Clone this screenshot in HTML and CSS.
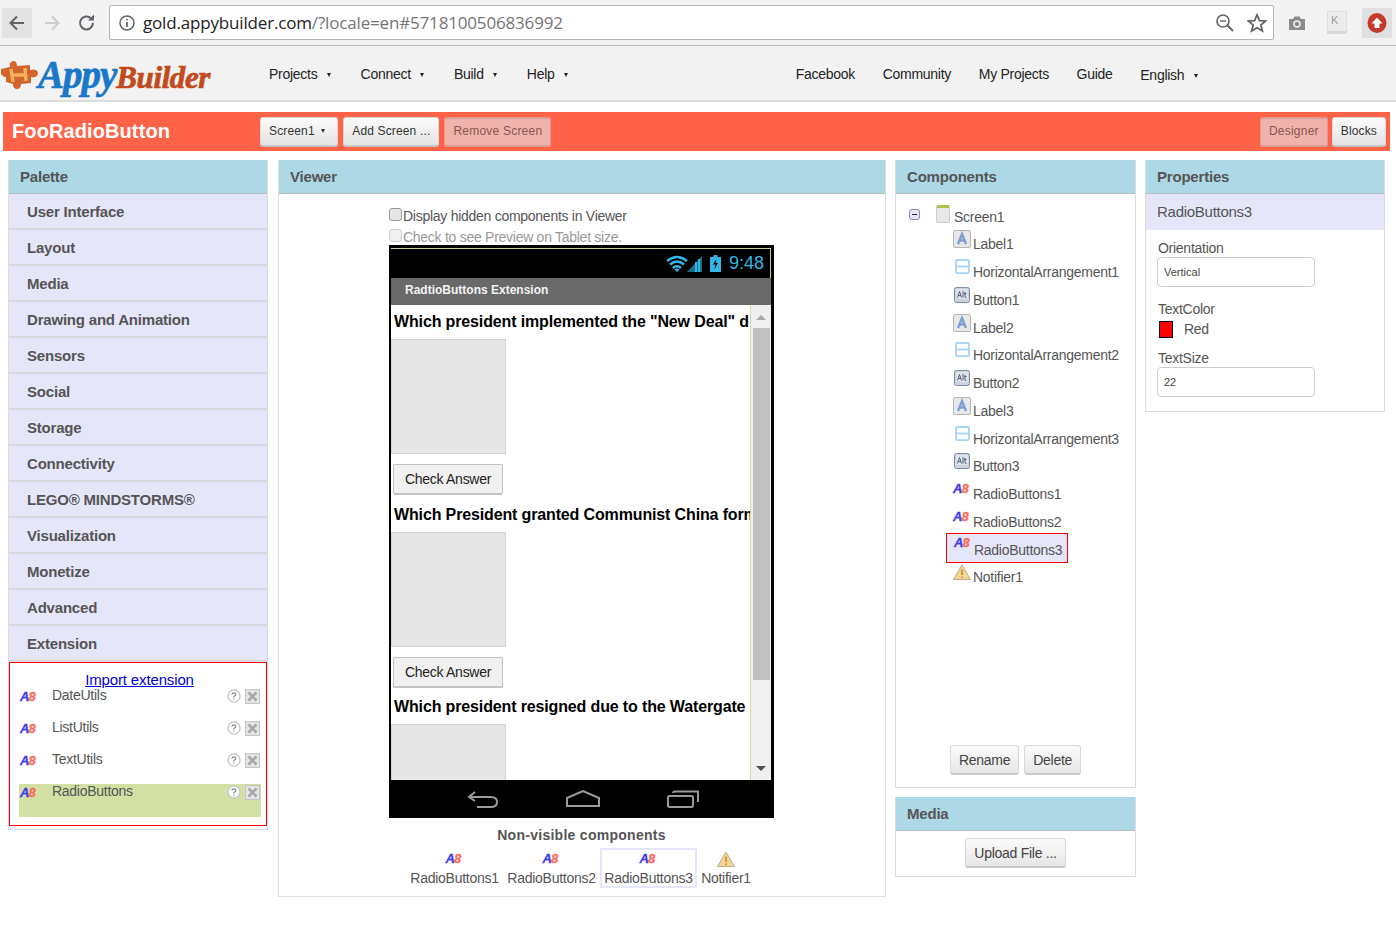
FILE: index.html
```html
<!DOCTYPE html>
<html lang="en">

<head>
    <meta charset="UTF-8">
    <meta name="viewport" content="width=device-width, initial-scale=1.0">
    <title>AppyBuilder</title>
    <link rel="stylesheet" href="styles.css">
</head>

<body>
    <svg class="sprites" width="0" height="0">
        <symbol id="ico-label" viewBox="0 0 18 18">
            <rect x="0.5" y="0.5" width="17" height="17" rx="1.5" fill="#e8e8e8" stroke="#b5b5b5"/>
            <path d="M5 14 L9 4 L13 14 M6.5 10.5 H11.5" fill="none" stroke="#7f9fd0" stroke-width="2.4"/>
        </symbol>
        <symbol id="ico-arr" viewBox="0 0 16 16">
            <rect x="1" y="1" width="14" height="14" rx="1.5" fill="#fff" stroke="#a9d4fa" stroke-width="2"/>
            <path d="M1 8 H15" stroke="#a9d4fa" stroke-width="2"/>
        </symbol>
        <symbol id="ico-btn" viewBox="0 0 16 16">
            <rect x="0.5" y="0.5" width="15" height="15" rx="2" fill="#ccd3de" stroke="#7b8ca6"/>
            <rect x="2" y="2" width="12" height="10" fill="#dfe3ea"/>
            <path d="M3.5 10.5 L5.5 4.5 L7.5 10.5 M4.3 8.5 H6.7 M9 4 V10.5 M11 5 V10 Q11 10.5 12.5 10.5 M10 6.5 H12.5" fill="none" stroke="#56627a" stroke-width="1"/>
        </symbol>
        <symbol id="ico-warn" viewBox="0 0 18 16">
            <path d="M9 1 L17.5 15.5 H0.5 Z" fill="#f4d692" stroke="#b9ad90"/>
            <path d="M9 5.5 V11 M9 12.5 V14" stroke="#c08a30" stroke-width="1.6"/>
        </symbol>
        <symbol id="ico-help" viewBox="0 0 14 14">
            <circle cx="7" cy="7" r="6" fill="#fff" stroke="#ccc" stroke-width="1.6"/>
            <path d="M5 5.5 Q5 3.8 7 3.8 Q9 3.8 9 5.4 Q9 6.4 7 7.4 V8.4 M7 9.5 V10.8" fill="none" stroke="#888" stroke-width="1.2"/>
        </symbol>
        <symbol id="ico-del" viewBox="0 0 15 15">
            <rect x="0.5" y="0.5" width="14" height="14" fill="#e4e4e4" stroke="#c4c4c4"/>
            <path d="M3.5 3.5 L11.5 11.5 M11.5 3.5 L3.5 11.5" stroke="#a8a8a8" stroke-width="2.6"/>
        </symbol>
    </svg>

    <!-- browser toolbar -->
    <div class="chrome">
        <span class="chrome-btn active">
            <svg width="20" height="20" viewBox="0 0 20 20"><path d="M17 10 H4 M10 3.5 L3.5 10 L10 16.5" fill="none" stroke="#5f6368" stroke-width="2"/></svg>
        </span>
        <span class="chrome-btn">
            <svg width="20" height="20" viewBox="0 0 20 20"><path d="M3 10 H16 M10 3.5 L16.5 10 L10 16.5" fill="none" stroke="#cdcdcd" stroke-width="2"/></svg>
        </span>
        <span class="chrome-btn">
            <svg width="20" height="20" viewBox="0 0 20 20"><path d="M16 10 A6.5 6.5 0 1 1 14 5.2" fill="none" stroke="#5f6368" stroke-width="2"/><path d="M11 7.5 H17 V1.5 Z" fill="#5f6368"/></svg>
        </span>
        <div class="omnibox">
            <svg width="18" height="18" viewBox="0 0 18 18"><circle cx="9" cy="9" r="7" fill="none" stroke="#5f6368" stroke-width="1.5"/><path d="M9 8 V13 M9 5 V6.6" stroke="#5f6368" stroke-width="1.7"/></svg>
            <span class="url"><span class="url-host">gold.appybuilder.com</span>/?locale=en#5718100506836992</span>
            <svg class="omni-zoom" width="20" height="20" viewBox="0 0 20 20"><circle cx="8" cy="8" r="6" fill="none" stroke="#5f6368" stroke-width="1.6"/><path d="M5 8 H11" stroke="#5f6368" stroke-width="1.4"/><path d="M12.5 12.5 L18 18" stroke="#5f6368" stroke-width="2"/></svg>
            <svg width="20" height="20" viewBox="0 0 20 20"><path d="M10 1.8 L12.4 7.6 L18.6 8 L13.8 12 L15.4 18 L10 14.7 L4.6 18 L6.2 12 L1.4 8 L7.6 7.6 Z" fill="none" stroke="#5f6368" stroke-width="1.7"/></svg>
        </div>
        <div class="ext-icons">
            <svg width="18" height="16" viewBox="0 0 18 16"><path d="M1 4 H5 L6.5 1.5 H11.5 L13 4 H17 V15 H1 Z" fill="#8a8a8a"/><circle cx="9" cy="9" r="3" fill="none" stroke="#f2f2f2" stroke-width="1.5"/></svg>
            <span class="ext-k">K</span>
            <span class="ext-up">
                <svg width="20" height="20" viewBox="0 0 20 20"><ellipse cx="10" cy="10" rx="9.5" ry="10" fill="#c5392a"/><path d="M10 4.5 L15.5 10.5 H12.5 V15 H7.5 V10.5 H4.5 Z" fill="#fff"/></svg>
            </span>
        </div>
    </div>

    <!-- top menu -->
    <div class="topnav">
        <div class="logo">
            <svg width="42" height="34" viewBox="0 0 42 34"><path d="M1 12 L10 10 Q9 5 13 4 Q17 4 17 9 L30 8 L30 13 Q37 11 38 16 Q38 21 31 20 L31 26 L21 27 Q21 32 17 32 Q13 32 13 27 L6 25 L6 20 Q0 20 1 12 Z" fill="#d5642c"/><path d="M11 12 L13 25 M25 11 L26 24 M12 18 H26" stroke="#f2b25c" stroke-width="3.4" fill="none"/></svg>
            <span class="logo-text"><span class="logo-appy">Appy</span><span class="logo-builder">Builder</span></span>
        </div>
        <nav class="menu-left">
            <a>Projects <i class="caret"></i></a>
            <a>Connect <i class="caret"></i></a>
            <a>Build <i class="caret"></i></a>
            <a>Help <i class="caret"></i></a>
        </nav>
        <nav class="menu-right">
            <a>Facebook</a>
            <a>Community</a>
            <a>My Projects</a>
            <a>Guide</a>
            <a class="lang">English <i class="caret"></i></a>
        </nav>
    </div>

    <!-- project bar -->
    <div class="projectbar">
        <span class="project-name">FooRadioButton</span>
        <button class="tbtn">Screen1 <i class="caret"></i></button>
        <button class="tbtn">Add Screen ...</button>
        <button class="tbtn off">Remove Screen</button>
        <span class="spacer"></span>
        <button class="tbtn off designer">Designer</button>
        <button class="tbtn">Blocks</button>
    </div>

    <div class="workspace">
        <!-- palette -->
        <section class="panel palette">
            <h2 class="panel-head">Palette</h2>
            <div class="drawer">User Interface</div>
            <div class="drawer">Layout</div>
            <div class="drawer">Media</div>
            <div class="drawer">Drawing and Animation</div>
            <div class="drawer">Sensors</div>
            <div class="drawer">Social</div>
            <div class="drawer">Storage</div>
            <div class="drawer">Connectivity</div>
            <div class="drawer">LEGO® MINDSTORMS®</div>
            <div class="drawer">Visualization</div>
            <div class="drawer">Monetize</div>
            <div class="drawer">Advanced</div>
            <div class="drawer">Extension</div>
            <div class="ext-box">
                <a class="import-link">Import extension</a>
                <div class="ext-row">
                    <span class="ab"><b>A</b><i>8</i></span><span class="ext-name">DateUtils</span>
                    <svg class="ext-help"><use href="#ico-help"/></svg><svg class="ext-del"><use href="#ico-del"/></svg>
                </div>
                <div class="ext-row">
                    <span class="ab"><b>A</b><i>8</i></span><span class="ext-name">ListUtils</span>
                    <svg class="ext-help"><use href="#ico-help"/></svg><svg class="ext-del"><use href="#ico-del"/></svg>
                </div>
                <div class="ext-row">
                    <span class="ab"><b>A</b><i>8</i></span><span class="ext-name">TextUtils</span>
                    <svg class="ext-help"><use href="#ico-help"/></svg><svg class="ext-del"><use href="#ico-del"/></svg>
                </div>
                <div class="ext-row picked">
                    <span class="ab"><b>A</b><i>8</i></span><span class="ext-name">RadioButtons</span>
                    <svg class="ext-help"><use href="#ico-help"/></svg><svg class="ext-del"><use href="#ico-del"/></svg>
                </div>
            </div>
        </section>

        <!-- viewer -->
        <section class="panel viewer">
            <h2 class="panel-head">Viewer</h2>
            <div class="viewer-body">
                <label class="chk"><input type="checkbox">Display hidden components in Viewer</label>
                <label class="chk faded"><input type="checkbox" disabled>Check to see Preview on Tablet size.</label>
                <div class="phone">
                    <div class="status">
                        <svg width="36" height="18" viewBox="0 0 36 18"><path d="M1 6 Q11 -2 21 6 M4 9.5 Q11 3.5 18 9.5 M7 13 Q11 9.5 15 13" fill="none" stroke="#33b5e5" stroke-width="2.4"/><path d="M11 17 L8.5 14.5 Q11 12.5 13.5 14.5 Z" fill="#33b5e5"/><path d="M21 17 L36 1 V17 Z" fill="#1e6f8d"/><path d="M30 17 V7 M33 17 V4" stroke="#33b5e5" stroke-width="2"/></svg>
                        <svg class="battery" width="11" height="17" viewBox="0 0 11 17"><path d="M3.5 0 H7.5 V2 H11 V17 H0 V2 H3.5 Z" fill="#33b5e5"/><path d="M6.5 4 L3 9.5 H5.5 L4.5 14 L8 8 H5.5 Z" fill="#000"/></svg>
                        <span class="clock">9:48</span>
                    </div>
                    <div class="app-title">RadtioButtons Extension</div>
                    <div class="screen">
                        <div class="screen-content">
                            <div class="question">Which president implemented the "New Deal" d</div>
                            <div class="pic"></div>
                            <button class="answer">Check Answer</button>
                            <div class="question">Which President granted Communist China form</div>
                            <div class="pic"></div>
                            <button class="answer">Check Answer</button>
                            <div class="question">Which president resigned due to the Watergate</div>
                            <div class="pic"></div>
                        </div>
                        <div class="scrollbar">
                            <span class="arrow-up"></span>
                            <span class="thumb"></span>
                            <span class="arrow-down"></span>
                        </div>
                    </div>
                    <div class="softkeys">
                        <svg width="32" height="20" viewBox="0 0 32 20"><path d="M8 3 L2 8 L8 12 M2 8 H24 Q30 8 30 13 Q30 18 24 18 H10" fill="none" stroke="#9a9a9a" stroke-width="2"/></svg>
                        <svg width="34" height="18" viewBox="0 0 34 18"><path d="M1 8 L17 1 L33 8 V16 H1 Z" fill="none" stroke="#9a9a9a" stroke-width="2"/></svg>
                        <svg width="32" height="18" viewBox="0 0 32 18"><rect x="1" y="6" width="25" height="11" rx="1.5" fill="none" stroke="#9a9a9a" stroke-width="2"/><path d="M6 3 Q6 1.5 8 1.5 H31 V12" fill="none" stroke="#9a9a9a" stroke-width="2"/></svg>
                    </div>
                </div>
                <div class="nonvis-title">Non-visible components</div>
                <div class="nonvis">
                    <div class="nv"><span class="ab"><b>A</b><i>8</i></span><span>RadioButtons1</span></div>
                    <div class="nv"><span class="ab"><b>A</b><i>8</i></span><span>RadioButtons2</span></div>
                    <div class="nv sel"><span class="ab"><b>A</b><i>8</i></span><span>RadioButtons3</span></div>
                    <div class="nv nv-last"><svg class="nv-warn"><use href="#ico-warn"/></svg><span>Notifier1</span></div>
                </div>
            </div>
        </section>

        <div class="col-mid">
            <!-- components -->
            <section class="panel components">
                <h2 class="panel-head">Components</h2>
                <div class="tree">
                    <div class="tree-root">
                        <span class="collapse"></span>
                        <span class="screen-ico"></span>
                        <span class="root-name">Screen1</span>
                    </div>
                    <div class="tree-row"><svg class="tico"><use href="#ico-label"/></svg>Label1</div>
                    <div class="tree-row"><svg class="tico-arr"><use href="#ico-arr"/></svg>HorizontalArrangement1</div>
                    <div class="tree-row"><svg class="tico-btn"><use href="#ico-btn"/></svg>Button1</div>
                    <div class="tree-row"><svg class="tico"><use href="#ico-label"/></svg>Label2</div>
                    <div class="tree-row"><svg class="tico-arr"><use href="#ico-arr"/></svg>HorizontalArrangement2</div>
                    <div class="tree-row"><svg class="tico-btn"><use href="#ico-btn"/></svg>Button2</div>
                    <div class="tree-row"><svg class="tico"><use href="#ico-label"/></svg>Label3</div>
                    <div class="tree-row"><svg class="tico-arr"><use href="#ico-arr"/></svg>HorizontalArrangement3</div>
                    <div class="tree-row"><svg class="tico-btn"><use href="#ico-btn"/></svg>Button3</div>
                    <div class="tree-row"><span class="ab tico-ab"><b>A</b><i>8</i></span>RadioButtons1</div>
                    <div class="tree-row"><span class="ab tico-ab"><b>A</b><i>8</i></span>RadioButtons2</div>
                    <div class="tree-row current"><span class="ab tico-ab"><b>A</b><i>8</i></span>RadioButtons3</div>
                    <div class="tree-row"><svg class="tico tico-warn"><use href="#ico-warn"/></svg>Notifier1</div>
                </div>
                <div class="comp-actions">
                    <button class="pbtn">Rename</button>
                    <button class="pbtn">Delete</button>
                </div>
            </section>

            <!-- media -->
            <section class="panel media">
                <h2 class="panel-head">Media</h2>
                <div class="media-body"><button class="pbtn">Upload File ...</button></div>
            </section>
        </div>

        <!-- properties -->
        <section class="panel properties">
            <h2 class="panel-head">Properties</h2>
            <div class="prop-selected">RadioButtons3</div>
            <div class="prop-body">
                <div class="prop-label">Orientation</div>
                <div class="prop-input">Vertical</div>
                <div class="prop-label second">TextColor</div>
                <div class="prop-color"><span class="swatch"></span>Red</div>
                <div class="prop-label third">TextSize</div>
                <div class="prop-input">22</div>
            </div>
        </section>
    </div>
</body>

</html>
```

FILE: styles.css
```css
* {
    box-sizing: border-box;
}

body {
    margin: 0;
    width: 1396px;
    height: 929px;
    overflow: hidden;
    background-color: #fff;
    font-family: "Liberation Sans", Arial, sans-serif;
    font-size: 14px;
    letter-spacing: -0.27px;
    color: #555;
}

.sprites {
    position: absolute;
}

/* browser toolbar */
.chrome {
    height: 46px;
    display: flex;
    align-items: center;
    padding: 0 0 0 2px;
    background-color: #f2f2f2;
    border-bottom: 1px solid #bdbdbd;
}

.chrome-btn {
    width: 30px;
    height: 30px;
    margin-right: 5px;
    display: flex;
    align-items: center;
    justify-content: center;
}

.chrome-btn.active {
    background-color: #e3e3e3;
}

.omnibox {
    width: 1165px;
    height: 35px;
    margin-left: 2px;
    padding: 0 6px 0 8px;
    display: flex;
    align-items: center;
    gap: 7px;
    background-color: #fff;
    border: 1px solid #b4b4b4;
    border-radius: 2px;
}

.url {
    flex: 1;
    font-family: "Open Sans", "Liberation Sans", sans-serif;
    font-size: 17px;
    letter-spacing: -0.17px;
    color: #757575;
}

.url-host {
    color: #222;
}

.omni-zoom {
    margin-right: 5px;
}

.ext-icons {
    flex: 1;
    display: flex;
    align-items: center;
    gap: 21px;
    padding-left: 14px;
}

.ext-k {
    width: 20px;
    height: 23px;
    margin-right: -6px;
    padding: 2px 0 0 3px;
    font-size: 11px;
    color: #999;
    background-color: #ececec;
    border: 1px solid #ddd;
    border-bottom: 3px solid #d8d8d8;
}

.ext-up {
    width: 30px;
    height: 30px;
    display: flex;
    align-items: center;
    justify-content: center;
    background-color: #e0e0e0;
}

/* top menu */
.topnav {
    height: 56px;
    display: flex;
    align-items: center;
    padding-top: 2px;
    background-color: #f2f2f2;
    border-bottom: 2px solid #dcdcdc;
    color: #222;
}

.logo {
    width: 269px;
    display: flex;
    align-items: center;
}

.logo svg {
    margin-right: -4px;
    flex: none;
}

.logo-text {
    font-family: "Liberation Serif", serif;
    font-style: italic;
    font-weight: bold;
    font-size: 39px;
    letter-spacing: -1px;
    line-height: 1;
    -webkit-text-stroke: 0.7px;
}

.logo-appy {
    color: #1a78c8;
}

.logo-builder {
    color: #c24a1c;
    font-size: 31px;
    letter-spacing: -0.4px;
}

.menu-left,
.menu-right {
    display: flex;
    align-items: center;
}

.menu-left a {
    margin-right: 29.5px;
}

.menu-right {
    margin-left: 198px;
}

.menu-right a {
    margin-right: 27.7px;
}

.menu-right .lang {
    padding-top: 2px;
}

.caret {
    display: inline-block;
    width: 0;
    height: 0;
    margin-left: 6px;
    vertical-align: 2px;
    border-top: 4px solid #222;
    border-left: 2.5px solid transparent;
    border-right: 2.5px solid transparent;
}

/* project bar */
.projectbar {
    height: 39px;
    margin: 10px 6px 0 3px;
    padding: 0 4px 0 9px;
    display: flex;
    align-items: center;
    gap: 5px;
    background-color: #ff6347;
}

.project-name {
    width: 243px;
    font-size: 20px;
    font-weight: bold;
    letter-spacing: 0.1px;
    color: #fff;
}

.spacer {
    flex: 1;
}

.tbtn {
    height: 30px;
    padding: 0 8px;
    font-family: "Liberation Sans", Arial, sans-serif;
    font-size: 12px;
    letter-spacing: 0.15px;
    color: #333;
    background: linear-gradient(#fbfbfb, #e3e3e3);
    border: 1px solid #d8d8d8;
    border-bottom: 2px solid #c4c4c4;
    border-radius: 3px;
}

.tbtn .caret {
    margin: 0 4px 0 3px;
    border-top-color: #333;
}

.tbtn.off {
    padding-bottom: 2px;
    letter-spacing: 0.22px;
    color: #8a5550;
    background: #efb3ab;
    border-color: #dc9c93;
    border-width: 2px 1px;
}

.tbtn.designer {
    margin-right: -1px;
}

/* panels */
.workspace {
    display: flex;
    align-items: flex-start;
    margin-top: 9px;
    padding-left: 8px;
}

.panel {
    border: 1px solid #ddd;
    border-top: 0;
    background-color: #fff;
}

.panel-head {
    height: 34px;
    margin: 0;
    padding: 0 11px;
    font-size: 15px;
    line-height: 34px;
    letter-spacing: -0.2px;
    color: #555;
    background-color: #add8e6;
    border-bottom: 1px solid #b4bcbe;
}

.palette {
    width: 260px;
    height: 670px;
    margin-right: 10px;
}

.drawer {
    height: 36px;
    padding-left: 18px;
    font-size: 15px;
    font-weight: bold;
    line-height: 35px;
    letter-spacing: -0.2px;
    color: #555;
    background-color: #e6e6fa;
    border-bottom: 2px solid #d6d6dc;
}

.ext-box {
    height: 164px;
    padding: 9px 5px 0 9px;
    border: 1px solid #f00;
}

.import-link {
    display: block;
    height: 16px;
    padding-right: 1px;
    text-align: center;
    font-size: 15px;
    line-height: 16px;
    letter-spacing: -0.14px;
    color: #00d;
    text-decoration: underline;
}

.ext-row {
    height: 32px;
    display: flex;
    align-items: flex-start;
}

.ab {
    display: inline-flex;
    width: 18px;
    flex: none;
    font-family: "Liberation Sans", Arial, sans-serif;
    font-size: 13px;
    font-style: italic;
    font-weight: bold;
    line-height: 14px;
    letter-spacing: 0;
    -webkit-text-stroke: 0.3px;
}

.ab b {
    color: #3b3bf0;
}

.ab i {
    margin-left: -1px;
    color: #ff6a5a;
}

.ext-row .ab {
    margin: 2px 14px 0 1px;
}

.ext-name {
    flex: 1;
    line-height: 14px;
}

.ext-help {
    width: 14px;
    height: 14px;
    margin: 1px 4px 0 0;
}

.ext-del {
    width: 15px;
    height: 15px;
    margin: 1px 1px 0 0;
}

.ext-row.picked {
    height: 33px;
    background-color: #d2e0a4;
}

.viewer {
    width: 608px;
    height: 737px;
    margin-right: 9px;
}

.viewer-body {
    padding-left: 110px;
}

.chk {
    display: flex;
    align-items: center;
    height: 21px;
}

.chk:first-child {
    margin-top: 11px;
}

.chk input {
    width: 13px;
    height: 13px;
    margin: 0 1px 2px 0;
    appearance: none;
    background-color: #e6e6e6;
    border: 1px solid #999;
    border-radius: 3px;
}

.chk.faded {
    color: #999;
}

.chk.faded input {
    background-color: #efefef;
    border-color: #ccc;
}

.phone {
    width: 385px;
    height: 573px;
    margin-top: -2px;
    border: 3px solid #000;
    border-left-width: 2px;
    display: flex;
    flex-direction: column;
    color: #000;
}

.status {
    height: 30px;
    flex: none;
    display: flex;
    align-items: center;
    justify-content: flex-end;
    padding-right: 6px;
    background-color: #000;
    border-top: 1px solid #c8d09a;
    border-right: 1px solid #c8d09a;
}

.battery {
    margin-left: 8px;
}

.clock {
    margin-left: 8px;
    font-size: 18px;
    letter-spacing: 0;
    color: #33b5e5;
}

.app-title {
    height: 27px;
    flex: none;
    padding-left: 14px;
    font-size: 12px;
    font-weight: bold;
    line-height: 24px;
    letter-spacing: 0;
    color: #f2f2f2;
    background-color: #696969;
}

.screen {
    height: 475px;
    flex: none;
    display: flex;
    overflow: hidden;
    background-color: #fff;
}

.screen-content {
    width: 360px;
    overflow: hidden;
    border-right: 1px solid #d2dc9c;
}

.question {
    height: 34px;
    padding-left: 3px;
    font-size: 16px;
    font-weight: bold;
    line-height: 34px;
    letter-spacing: -0.14px;
    white-space: nowrap;
}

.pic {
    width: 115px;
    height: 115px;
    background-color: #e6e6e6;
    border: 1px solid #d4d4d4;
}

.answer {
    display: block;
    width: 110px;
    height: 31px;
    margin: 10px 0 2.5px 2px;
    padding: 0;
    font-family: "Liberation Sans", Arial, sans-serif;
    font-size: 14px;
    letter-spacing: -0.27px;
    color: #222;
    background-color: #f0f0f0;
    border: 1px solid #c2c2c2;
    border-bottom-width: 2px;
    border-radius: 2px;
}

.scrollbar {
    flex: 1;
    display: flex;
    flex-direction: column;
    align-items: center;
    background-color: #f0f0f0;
}

.arrow-up {
    margin: 10px 0 8px;
    border-bottom: 5px solid #a8a8a8;
    border-left: 5px solid transparent;
    border-right: 5px solid transparent;
}

.thumb {
    width: 17px;
    height: 352px;
    background-color: #c0c0c0;
}

.arrow-down {
    margin-top: 86px;
    border-top: 5px solid #505050;
    border-left: 5px solid transparent;
    border-right: 5px solid transparent;
}

.softkeys {
    flex: 1;
    display: flex;
    align-items: center;
    justify-content: center;
    gap: 67px;
    padding: 3px 0 0 3px;
    background-color: #000;
}

.nonvis-title {
    width: 385px;
    margin-top: 9px;
    text-align: center;
    font-weight: bold;
    line-height: 16px;
    letter-spacing: 0.27px;
}

.nonvis {
    display: flex;
    margin: 5px 0 0 17px;
}

.nv {
    width: 97px;
    height: 40px;
    padding-top: 2px;
    display: flex;
    flex-direction: column;
    align-items: center;
    border: 2px solid transparent;
    line-height: 16px;
    white-space: nowrap;
}

.nv.sel {
    border-color: #e6e6fa;
}

.nv.nv-last {
    width: 58px;
}

.nv .ab {
    margin-bottom: 4px;
}

.nv-warn {
    width: 18px;
    height: 16px;
    margin: -1px 0 3px;
}

.col-mid {
    width: 241px;
    margin-right: 9px;
}

.components {
    height: 628px;
    display: flex;
    flex-direction: column;
}

.tree {
    flex: 1;
    padding: 5px 0 0 13px;
}

.tree-root {
    height: 26.5px;
    display: flex;
    align-items: flex-end;
}

.root-name {
    margin-bottom: 1px;
}

.collapse {
    position: relative;
    width: 11px;
    height: 11px;
    margin: 0 16px 6px 0;
    background-color: #e6e6fa;
    border: 1px solid #8a8ab4;
    border-radius: 3px;
}

.collapse::after {
    content: "";
    position: absolute;
    left: 2px;
    top: 4px;
    width: 5px;
    height: 1px;
    background-color: #223;
}

.screen-ico {
    width: 14px;
    height: 18px;
    margin: 0 4px 3px 0;
    background-color: #e8e8e8;
    border: 1px solid #ccc;
    border-top: 3px solid #a8c64e;
    border-radius: 2px;
}

.tree-row {
    width: 172px;
    height: 27.75px;
    display: flex;
    align-items: flex-end;
    margin-left: 37px;
    padding: 0 0 1px 7px;
    white-space: nowrap;
}

.tico {
    width: 18px;
    height: 18px;
    margin: 0 2px 4px 0;
    flex: none;
}

.tico-warn {
    height: 16px;
    margin-bottom: 5px;
}

.tico-arr {
    width: 15px;
    height: 15px;
    margin: 0 3px 6px 2px;
    flex: none;
}

.tico-btn {
    width: 16px;
    height: 16px;
    margin: 0 3px 5px 1px;
    flex: none;
}

.tico-ab {
    margin: 0 2px 6px 0;
}

.tree-row.current {
    width: 122px;
    height: 30px;
    margin-top: 1.75px;
    margin-bottom: -4px;
    padding: 0 0 4px 7px;
    background-color: #e6e6fa;
    border: 1px solid #f00;
}

.tree-row.current .tico-ab {
    margin-bottom: 8px;
}

.comp-actions {
    display: flex;
    justify-content: center;
    gap: 5px;
    margin-bottom: 12px;
}

.pbtn {
    height: 30px;
    padding: 0 8px;
    font-family: "Liberation Sans", Arial, sans-serif;
    font-size: 14px;
    letter-spacing: -0.27px;
    color: #444;
    background: linear-gradient(#fbfbfb, #e6e6e6);
    border: 1px solid #d8d8d8;
    border-bottom: 2px solid #c8c8c8;
    border-radius: 3px;
}

.media {
    height: 80px;
    margin-top: 9px;
}

.media-body {
    display: flex;
    justify-content: center;
    padding-top: 7px;
}

.properties {
    width: 240px;
    height: 252px;
}

.prop-selected {
    height: 36px;
    padding-left: 11px;
    font-size: 15px;
    line-height: 36px;
    color: #555;
    background-color: #e6e6fa;
}

.prop-body {
    padding: 10px 11px;
}

.prop-label {
    padding-left: 1px;
    line-height: 16px;
}

.prop-label.second {
    margin-top: 14px;
}

.prop-label.third {
    margin-top: 12px;
}

.prop-input {
    width: 158px;
    height: 30px;
    margin-top: 1px;
    padding-left: 6px;
    font-size: 11px;
    line-height: 28px;
    letter-spacing: 0;
    color: #444;
    background-color: #fff;
    border: 1px solid #ccc;
    border-radius: 4px;
}

.prop-color {
    display: flex;
    align-items: center;
    height: 18px;
    margin: 3px 0 0 2px;
}

.swatch {
    width: 14px;
    height: 17px;
    margin-right: 11px;
    background-color: #f00;
    border: 1px solid #000;
}
```
